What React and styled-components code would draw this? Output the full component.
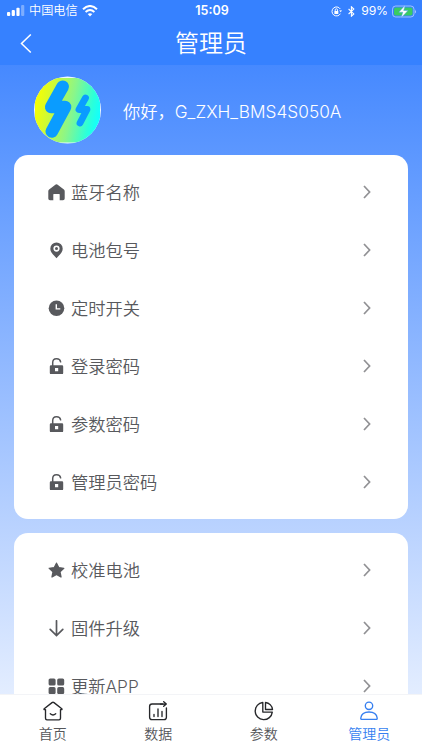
import React from 'react';
import styled, { createGlobalStyle } from 'styled-components';

const Global = createGlobalStyle`
  * { box-sizing: border-box; }
  body { margin: 0; }
`;

const Screen = styled.div`
  width: 422px;
  height: 750px;
  display: flex;
  flex-direction: column;
  overflow: hidden;
  background: #fff;
  color: #58595d;
  font-family: Inter, "Noto Sans CJK SC", sans-serif;
  font-weight: 350;
`;

const Header = styled.header`
  flex: none;
  height: 65px;
  background: #3681ff;
  color: #fff;
`;

const StatusBar = styled.div`
  height: 22px;
  display: grid;
  grid-template-columns: 1fr auto 1fr;
  align-items: center;
  padding: 0 5px 0 7px;
  font-size: 12px;
  line-height: 22px;
`;

const StatusGroup = styled.div`
  display: flex;
  align-items: center;
  justify-content: ${(p) => (p.$end ? 'flex-end' : 'flex-start')};
  height: 22px;
  gap: ${(p) => (p.$end ? '6px' : '4px')};
`;

const Carrier = styled.span`
  font-size: 12.2px;
  font-weight: 350;
`;

const Clock = styled.span`
  font-size: 12.5px;
  font-weight: 600;
`;

const Percent = styled.span`
  font-size: 12.2px;
  font-weight: 400;
  letter-spacing: -0.1px;
  margin-right: -2px;
`;

const NavBar = styled.div`
  height: 43px;
  display: grid;
  grid-template-columns: 40px 1fr 40px;
  align-items: center;
`;

const BackButton = styled.button`
  border: 0;
  background: none;
  color: inherit;
  padding: 0 0 0 20px;
  display: flex;
`;

const Title = styled.h1`
  margin: 0;
  padding-top: 1px;
  text-align: center;
  font-size: 24px;
  line-height: 42px;
  font-weight: 350;
`;

const Content = styled.main`
  flex: 1;
  min-height: 0;
  overflow: hidden;
  padding: 0 14px;
  background: linear-gradient(180deg, #4689ff 0%, #e3edff 100%);
`;

const Profile = styled.section`
  height: 90px;
  display: flex;
  align-items: center;
  padding-left: 20px;
  gap: 22px;
  color: #fff;
  font-size: 17.25px;
`;

const Greeting = styled.div`
  display: flex;
  align-items: baseline;
  white-space: nowrap;
`;

const DeviceName = styled.span`
  font-weight: 300;
  letter-spacing: 0.03px;
`;

const Card = styled.section`
  background: #fff;
  border-radius: 14px;
  padding: 8px 37px 8px 34px;
  margin-bottom: 14px;
`;

const Row = styled.div`
  height: 58px;
  display: grid;
  grid-template-columns: 17px 1fr 8px;
  column-gap: 6px;
  align-items: center;
  font-size: 17.25px;
  white-space: nowrap;
`;

const RowLabel = styled.span`
  padding-bottom: 2px;
`;

const TabBar = styled.nav`
  flex: none;
  height: 56px;
  display: grid;
  grid-template-columns: repeat(4, 1fr);
  background: #fff;
  border-top: 1px solid #f3f4f7;
`;

const Tab = styled.div`
  display: flex;
  flex-direction: column;
  align-items: center;
  padding-top: 6px;
  font-size: 14px;
  line-height: 20px;
  gap: 3px;
  color: ${(p) => (p.$active ? '#367ff0' : '#55565a')};
  svg { color: ${(p) => (p.$active ? '#367ff0' : '#26272a')}; }
`;

const Svg = styled.svg`
  display: block;
  flex: none;
`;

const Signal = () => (
  <Svg width="18" height="12" viewBox="0 0 18 12" fill="#fff">
    <rect x="0" y="7" width="3.2" height="4" rx="1" />
    <rect x="4.7" y="5" width="3.2" height="6" rx="1" />
    <rect x="9.4" y="2.8" width="3.2" height="8.2" rx="1" />
    <rect x="14.1" y="0" width="3.2" height="11" rx="1" opacity=".35" />
  </Svg>
);

const Wifi = () => (
  <Svg width="16" height="12" viewBox="0 0 16 12" fill="none" stroke="#fff" strokeWidth="2">
    <path d="M1 4.2Q8-2.2 15 4.2M3.6 6.9Q8 3.1 12.4 6.9" />
    <path d="M8 11.5 5.7 9.1Q8 7.3 10.3 9.1Z" fill="#fff" stroke="none" />
  </Svg>
);

const RotationLock = () => (
  <Svg width="11" height="11" viewBox="0 0 11 11" fill="none" stroke="#fff" strokeWidth="1">
    <path d="M9.3 3A4.5 4.5 0 1 0 9.4 7.7" />
    <path d="m8.2 4.5 1.6 1.7 1.1-1.9Z" fill="#fff" stroke="none" />
    <rect x="3.4" y="5" width="3.9" height="3" fill="#fff" stroke="none" />
    <path d="M4.2 5V3.9a1.15 1.15 0 0 1 2.3 0V5" strokeWidth=".9" />
  </Svg>
);

const Bluetooth = () => (
  <Svg width="7" height="11" viewBox="0 0 7 11" fill="none" stroke="#fff" strokeWidth="1.1">
    <path d="m.6 3 5.2 4.9-2.4 2.3V.8l2.4 2.3L.6 8" />
  </Svg>
);

const Battery = () => (
  <Svg width="25" height="13" viewBox="0 0 25 13">
    <rect x=".5" y="1" width="21.5" height="11" rx="3.2" fill="none" stroke="#fff" strokeOpacity=".5" />
    <rect x="2" y="2.5" width="18.5" height="8" rx="1.8" fill="#3acb62" />
    <path d="M23 4.5q1.8 2 0 4Z" fill="#fff" opacity=".6" />
    <path d="M13.3 0 6.8 7.2h4L9 13l7-7.5h-4.3Z" fill="#fff" stroke="#4b9ff0" strokeWidth=".5" />
  </Svg>
);

const BackArrow = () => (
  <Svg width="12" height="20" viewBox="0 0 12 20" fill="none" stroke="#fff" strokeWidth="1.5">
    <path d="M10.8 .5 1.5 9.5l9.3 9" />
  </Svg>
);

const Avatar = () => (
  <Svg width="67" height="68" viewBox="0 0 67 68">
    <defs>
      <linearGradient id="avatarFill" x1="0" y1=".4" x2="1" y2=".6">
        <stop offset="0" stopColor="#f7ff00" />
        <stop offset=".15" stopColor="#ddfb22" />
        <stop offset=".55" stopColor="#8af68a" />
        <stop offset=".85" stopColor="#2bffda" />
        <stop offset="1" stopColor="#10ffff" />
      </linearGradient>
      <clipPath id="avatarClip"><circle cx="33.5" cy="34" r="33.5" /></clipPath>
    </defs>
    <g clipPath="url(#avatarClip)">
      <rect width="67" height="68" fill="#eefaff" />
      <rect x="1" y="2" width="65" height="64.5" fill="url(#avatarFill)" />
    </g>
    <g fill="none" stroke="#0a9cff" strokeLinecap="round" strokeLinejoin="round">
      <path d="M28.7 10.7 17.2 31H31L17.8 55.5" strokeWidth="12.6" />
      <path d="M51.5 22 45 33.5h8L46 47" strokeWidth="6.8" />
    </g>
  </Svg>
);

const Chevron = () => (
  <Svg width="8" height="14" viewBox="0 0 8 14" fill="none" stroke="#919194" strokeWidth="1.7">
    <path d="m1 1 5.6 6L1 13" />
  </Svg>
);

const rowShapes = {
  home: <path d="M8.5.3q.8 0 1.5.6l5.9 4.7q.8.7.8 1.6v7.200q0 1.800-1.700 1.800h-3.300v-5.600q0-.5-.5-.5H5.800q-.5 0-.5.5v5.600H2Q.3 16.200.3 14.400V7.200q0-.9.8-1.600L7 .9Q7.700.3 8.500.3Z" />,
  pin: (
    <>
      <path fillRule="evenodd" d="M8.500.5a6.200 6.200 0 0 1 6.200 6.300c0 3.400-3.200 6.200-6.200 9.400-3-3.200-6.200-6-6.200-9.400A6.200 6.200 0 0 1 8.500.5Zm0 3a3.100 3.100 0 1 0 0 6.200 3.100 3.100 0 0 0 0-6.200Z" />
      <circle cx="8.500" cy="6.600" r="1.500" />
    </>
  ),
  clock: (
    <>
      <circle cx="8.500" cy="8.200" r="7.800" />
      <path d="M8.300 4.200v4.700h4" fill="none" stroke="#fff" strokeWidth="1.400" />
    </>
  ),
  lock: (
    <>
      <path fillRule="evenodd" d="M3 7.200h11q1.200 0 1.200 1.200v6.500q0 1.200-1.200 1.200H3q-1.200 0-1.200-1.200V8.400Q1.800 7.200 3 7.200Zm4 2.900v3.200h3.200v-3.200Z" />
      <path d="M4.700 7.800V4.600C4.700-.3 11.800-.3 12.600 3.800" fill="none" stroke="currentColor" strokeWidth="1.500" strokeLinecap="round" />
    </>
  ),
  star: <path d="m8.500 1.200 2.200 4.400 5.100.7-3.800 3.600 1 5.100-4.500-2.500L4 15l1-5.100-3.800-3.600 5.100-.7Z" stroke="currentColor" strokeWidth="1.300" strokeLinejoin="round" />,
  down: <path d="M8.500.8v14.500M2.200 9.300l6.300 6.200 6.300-6.200" fill="none" stroke="currentColor" strokeWidth="1.700" strokeLinecap="round" />,
  grid: (
    <>
      <rect x=".6" y=".5" width="7" height="7" rx="1.600" />
      <rect x="9.200" y=".5" width="7" height="7" rx="1.600" />
      <rect x=".6" y="9.100" width="7" height="7" rx="1.600" />
      <rect x="9.200" y="9.100" width="7" height="7" rx="1.600" />
    </>
  ),
};

const tabShapes = {
  home: (
    <>
      <path d="M10 1.200q.5 0 1 .4l7.800 6.200q.5.500 0 .8h-1.300v8.700q0 1.500-1.500 1.500H4q-1.500 0-1.500-1.500V8.600H1.200q-.5-.3 0-.8L9 1.600q.5-.4 1-.4Z" />
      <path d="M7.300 12.700q2.700 2.500 5.400 0" />
    </>
  ),
  data: (
    <>
      <path d="M15 3H4Q1.600 3 1.600 5.400v10.800q0 2.400 2.400 2.400h12q2.400 0 2.400-2.400V7" />
      <path d="M12.500 3.100h5.800M15.700.7 18.300 3l-2.600 2.300M6 13.500v2M10 8v7.500M14 10.500v5" />
    </>
  ),
  chart: (
    <>
      <path d="M8.800 1.500a8.600 8.600 0 1 0 9.500 9.600H8.800Z" />
      <path d="M11.500 1.500a8 8 0 0 1 7 7h-7Z" />
    </>
  ),
  user: (
    <>
      <circle cx="10" cy="4.800" r="3.700" />
      <path d="M2.800 18.300q-1.200 0-1-1.300C2.400 12.800 5.600 11 10 11s7.600 1.800 8.200 6q.2 1.300-1 1.300Z" />
    </>
  ),
};

const groups = [
  [
    ['home', '蓝牙名称'],
    ['pin', '电池包号'],
    ['clock', '定时开关'],
    ['lock', '登录密码'],
    ['lock', '参数密码'],
    ['lock', '管理员密码'],
  ],
  [
    ['star', '校准电池'],
    ['down', '固件升级'],
    ['grid', '更新APP'],
  ],
];

const tabs = [
  ['home', '首页'],
  ['data', '数据'],
  ['chart', '参数'],
  ['user', '管理员'],
];

export default function App() {
  return (
    <Screen>
      <Global />
      <Header>
        <StatusBar>
          <StatusGroup>
            <Signal />
            <Carrier>中国电信</Carrier>
            <Wifi />
          </StatusGroup>
          <Clock>15:09</Clock>
          <StatusGroup $end>
            <RotationLock />
            <Bluetooth />
            <Percent>99%</Percent>
            <Battery />
          </StatusGroup>
        </StatusBar>
        <NavBar>
          <BackButton aria-label="返回"><BackArrow /></BackButton>
          <Title>管理员</Title>
        </NavBar>
      </Header>
      <Content>
        <Profile>
          <Avatar />
          <Greeting><span>你好，</span><DeviceName>G_ZXH_BMS4S050A</DeviceName></Greeting>
        </Profile>
        {groups.map((rows, i) => (
          <Card key={i}>
            {rows.map(([icon, label]) => (
              <Row key={label}>
                <Svg width="17" height="17" viewBox="0 0 17 17" fill="currentColor">{rowShapes[icon]}</Svg>
                <RowLabel>{label}</RowLabel>
                <Chevron />
              </Row>
            ))}
          </Card>
        ))}
      </Content>
      <TabBar>
        {tabs.map(([icon, label]) => (
          <Tab key={icon} $active={icon === 'user'}>
            <Svg width="20" height="20" viewBox="0 0 20 20" fill="none" stroke="currentColor" strokeWidth="1.35" strokeLinejoin="round" strokeLinecap="round">
              {tabShapes[icon]}
            </Svg>
            <span>{label}</span>
          </Tab>
        ))}
      </TabBar>
    </Screen>
  );
}
